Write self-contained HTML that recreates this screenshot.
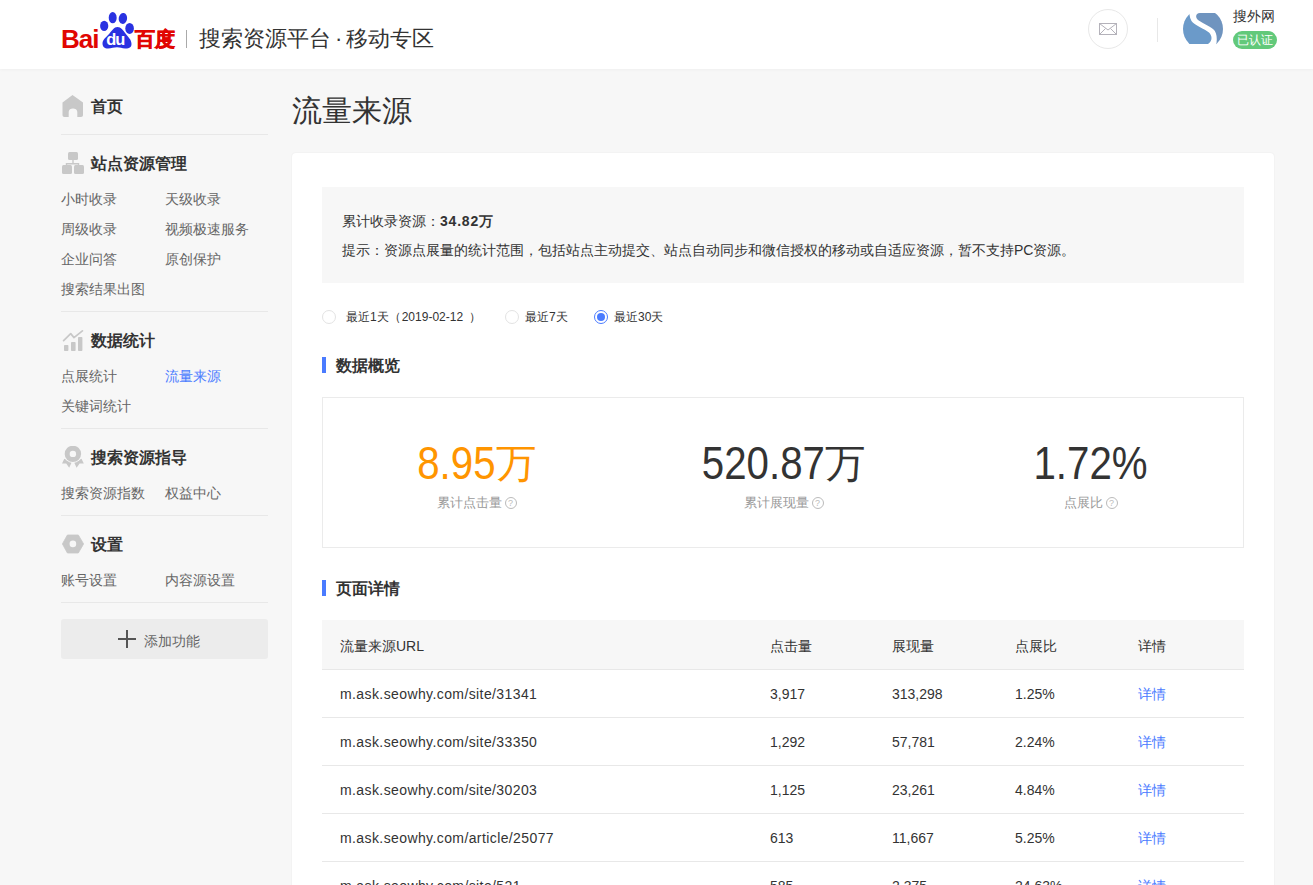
<!DOCTYPE html>
<html><head><meta charset="utf-8">
<style>
*{margin:0;padding:0;box-sizing:border-box}
html,body{width:1313px;height:885px;overflow:hidden;background:#f7f7f7;font-family:"Liberation Sans",sans-serif;color:#333}
.abs{position:absolute;white-space:nowrap}
#hdr{position:absolute;left:0;top:0;width:1313px;height:69px;background:#fff;box-shadow:0 1px 3px rgba(0,0,0,0.035)}
.sb{position:absolute;font-size:14px;color:#666;white-space:nowrap;line-height:16px}
.sbh{position:absolute;font-size:16px;font-weight:bold;color:#333;white-space:nowrap;line-height:18px}
.hr{position:absolute;left:61px;width:207px;height:1px;background:#e8e8e8}
.ico{position:absolute;left:62px}
#card{position:absolute;left:292px;top:153px;width:982px;height:800px;background:#fff;border-radius:4px;box-shadow:0 0 2px rgba(0,0,0,0.07)}
.info{position:absolute;left:322px;top:187px;width:922px;height:96px;background:#f7f7f7}
.t14{position:absolute;white-space:nowrap;font-size:14px;line-height:16px;color:#333}
.radio{position:absolute;top:310px;width:14px;height:14px;border:1px solid #e3e3e3;border-radius:50%;background:#fff}
.rl{position:absolute;top:309px;font-size:12px;line-height:16px;color:#333;white-space:nowrap}
.sec{position:absolute;left:322px;width:4px;height:16px;background:#4a7bff}
.sect{position:absolute;left:336px;font-size:16px;line-height:18px;font-weight:bold;color:#333;white-space:nowrap}
.stats{position:absolute;left:322px;top:397px;width:922px;height:151px;border:1px solid #ebebeb}
.col{position:absolute;top:0;width:307px;text-align:center}
.num{position:absolute;left:0;width:100%;top:40px;font-size:46px;line-height:50px;color:#333;white-space:nowrap;transform:scaleX(0.875)}
.lbl{position:absolute;left:0;width:100%;top:97px;font-size:13px;line-height:16px;color:#999;white-space:nowrap}
.q{display:inline-block;width:12px;height:12px;border:1px solid #bbb;border-radius:50%;font-size:9px;line-height:10px;text-align:center;vertical-align:1px;margin-left:3px;color:#bbb}
.th{position:absolute;left:322px;top:620px;width:922px;height:50px;background:#f7f7f7;border-bottom:1px solid #e8e8e8}
.tr{position:absolute;left:322px;width:922px;height:1px;background:#e8e8e8}
.c{position:absolute;font-size:14px;line-height:16px;color:#333;white-space:nowrap}
.lnk{color:#4a7bff}
.wan{display:inline-block;line-height:50px;transform:scaleY(0.865);transform-origin:50% 56%}
</style></head><body>
<div id="hdr"></div>
<!-- logo -->
<svg class="abs" style="left:60px;top:10px" width="120" height="42" viewBox="0 0 120 42">
  <text x="1" y="38" font-family="Liberation Sans" font-weight="bold" font-size="26" fill="#e10602" letter-spacing="-1">Bai</text>
  <g fill="#2932e1">
    <ellipse cx="44.2" cy="15.9" rx="4.1" ry="5.2"/>
    <ellipse cx="52.7" cy="7.7" rx="4" ry="5.6"/>
    <ellipse cx="62.9" cy="8.4" rx="4.2" ry="5.5" transform="rotate(8 62.9 8.4)"/>
    <ellipse cx="69.6" cy="18.4" rx="4.3" ry="5.5"/>
    <path d="M57.5 17 C61 17 63 20 65.5 23.5 C68 27 71.5 29.5 71.5 34 C71.5 38 68 38.8 65 38.5 C62 38.2 60 37.3 57 37.3 C54 37.3 51.5 38.5 48 38.5 C44.5 38.5 42.5 36.5 42.5 33.5 C42.5 29.5 46.5 27 49.5 23.5 C52 20.5 54 17 57.5 17 Z"/>
  </g>
  <text x="46.3" y="35.3" font-family="Liberation Sans" font-weight="bold" font-size="16.5" letter-spacing="-1.2" fill="#fff">du</text>
  <text x="75" y="36" font-family="Liberation Sans" font-weight="bold" font-size="20" fill="#e10602" stroke="#e10602" stroke-width="0.7">百度</text>
</svg>
<div class="abs" style="left:186px;top:30px;width:1px;height:18px;background:#aaa"></div>
<div class="abs" style="left:199px;top:26px;font-size:22px;line-height:26px;color:#333">搜索资源平台<span style="padding:0 4px">·</span>移动专区</div>

<!-- right header -->
<div class="abs" style="left:1088px;top:9px;width:40px;height:40px;border:1px solid #e8e8e8;border-radius:50%"></div>
<svg class="abs" style="left:1098px;top:22px" width="20" height="14" viewBox="0 0 20 14">
  <rect x="1.5" y="1.5" width="17" height="11" fill="none" stroke="#b4b2ba" stroke-width="1"/>
  <path d="M1.5 1.5 L10 8 L18.5 1.5 M1.5 12.5 L7.5 6.5 M18.5 12.5 L12.5 6.5" fill="none" stroke="#b4b2ba" stroke-width="1"/>
</svg>
<div class="abs" style="left:1157px;top:18px;width:1px;height:24px;background:#e8e8e8"></div>
<svg class="abs" style="left:1183px;top:9px" width="40" height="40" viewBox="0 0 40 40">
  <defs><clipPath id="cc"><circle cx="20" cy="20" r="20"/></clipPath></defs>
  <g clip-path="url(#cc)">
  <path d="M-1 -1 L6 -1 C6.5 3 6 8 8.5 12 C11 16 22 20 26 23.5 C29.5 27 29.5 32 25 35 L-1 35 Z" fill="#6b9ac9"/>
  <path d="M41 4 L17 4 C13 4 12 8 14.5 10.5 C17 13 26 17 30 20 C34 23 34.5 30 33 37 L41 41 Z" fill="#6f94bf"/>
  </g>
</svg>
<div class="abs" style="left:1233px;top:8px;font-size:14px;line-height:16px;color:#333">搜外网</div>
<div class="abs" style="left:1233px;top:31px;width:44px;height:18px;border-radius:9px;background:#62c97a;color:#fff;font-size:12px;line-height:19px;text-align:center">已认证</div>

<!-- sidebar -->
<svg class="ico" style="top:95px" width="22" height="22" viewBox="0 0 22 22"><path d="M10.5 0 L21 7.5 V20 C21 21 20.3 22 19 22 H15.3 V17 C15.3 14.5 13.3 13.5 11 13.5 C8.7 13.5 6.7 14.5 6.7 17 V22 H2.5 C1.2 22 0.5 21 0.5 20 V7.5 Z" fill="#c8c8c8"/></svg>
<div class="sbh" style="left:91px;top:98px">首页</div>
<div class="hr" style="top:134px"></div>

<svg class="ico" style="top:152px" width="22" height="22" viewBox="0 0 22 22"><g fill="#c8c8c8"><rect x="6" y="0" width="10" height="8" rx="1.5"/><rect x="0" y="13" width="10" height="9" rx="1.5"/><rect x="12" y="13" width="10" height="9" rx="1.5"/><path d="M10.3 8 h1.4 v3 h5.5 v2 h-1.4 v-0.6 h-10.6 v0.6 h-1.4 v-2 h6.5 Z"/></g></svg>
<div class="sbh" style="left:91px;top:155px">站点资源管理</div>
<div class="sb" style="left:61px;top:191px">小时收录</div>
<div class="sb" style="left:165px;top:191px">天级收录</div>
<div class="sb" style="left:61px;top:221px">周级收录</div>
<div class="sb" style="left:165px;top:221px">视频极速服务</div>
<div class="sb" style="left:61px;top:251px">企业问答</div>
<div class="sb" style="left:165px;top:251px">原创保护</div>
<div class="sb" style="left:61px;top:281px">搜索结果出图</div>
<div class="hr" style="top:311px"></div>

<svg class="ico" style="top:330px" width="22" height="22" viewBox="0 0 22 22"><g fill="#c8c8c8"><rect x="2" y="15" width="4.4" height="6" rx="0.8"/><rect x="9" y="11.9" width="4.6" height="9.1" rx="0.8"/><rect x="16" y="7" width="4.4" height="14" rx="0.8"/></g><path d="M1.6 10.6 L8.7 3.6 L12 7.6 L20.4 0.9" fill="none" stroke="#c8c8c8" stroke-width="1.7" stroke-linecap="round" stroke-linejoin="round"/></svg>
<div class="sbh" style="left:91px;top:332px">数据统计</div>
<div class="sb" style="left:61px;top:368px">点展统计</div>
<div class="sb lnk" style="left:165px;top:368px">流量来源</div>
<div class="sb" style="left:61px;top:398px">关键词统计</div>
<div class="hr" style="top:428px"></div>

<svg class="ico" style="top:446px" width="22" height="22" viewBox="0 0 22 22"><g fill="#c8c8c8"><path d="M2.3 12.8 L0 17.4 L4.2 17.4 L7.2 21.8 L9.6 16.5 Z M19.5 12.8 L21.8 17.4 L17.6 17.4 L14.6 21.8 L12.2 16.5 Z"/></g><circle cx="10.9" cy="7.9" r="9.1" fill="#f7f7f7"/><circle cx="10.9" cy="7.9" r="8.2" fill="#c8c8c8"/><circle cx="10.9" cy="7.9" r="3.2" fill="#f7f7f7"/></svg>
<div class="sbh" style="left:91px;top:449px">搜索资源指导</div>
<div class="sb" style="left:61px;top:485px">搜索资源指数</div>
<div class="sb" style="left:165px;top:485px">权益中心</div>
<div class="hr" style="top:515px"></div>

<svg class="ico" style="top:534px" width="22" height="22" viewBox="0 0 22 22"><path d="M5.4 1 H16.3 L21.6 9.9 L16.3 19 H5.4 L0.4 9.9 Z" fill="#c8c8c8" stroke="#c8c8c8" stroke-width="0.8" stroke-linejoin="round"/><circle cx="10.9" cy="9.9" r="3.3" fill="#f7f7f7"/></svg>
<div class="sbh" style="left:91px;top:536px">设置</div>
<div class="sb" style="left:61px;top:572px">账号设置</div>
<div class="sb" style="left:165px;top:572px">内容源设置</div>
<div class="hr" style="top:602px"></div>

<div class="abs" style="left:61px;top:619px;width:207px;height:40px;background:#ececec;border-radius:3px"></div>
<svg class="abs" style="left:118px;top:630px" width="18" height="18" viewBox="0 0 18 18"><path d="M8 0 h2 v8 h8 v2 h-8 v8 h-2 v-8 h-8 v-2 h8 Z" fill="#555"/></svg>
<div class="sb" style="left:144px;top:633px">添加功能</div>

<!-- main -->
<div class="abs" style="left:292px;top:94px;font-size:30px;line-height:34px;color:#333">流量来源</div>
<div id="card"></div>
<div class="info"></div>
<div class="t14" style="left:342px;top:213px">累计收录资源：<b style="letter-spacing:0.8px">34.82万</b></div>
<div class="t14" style="left:342px;top:242px">提示：资源点展量的统计范围，包括站点主动提交、站点自动同步和微信授权的移动或自适应资源，暂不支持PC资源。</div>

<div class="radio" style="left:322px"></div>
<div class="rl" style="left:346px">最近1天（<span style="margin-left:1px">2019-02-12</span><span style="margin-left:6px">）</span></div>
<div class="radio" style="left:505px"></div>
<div class="rl" style="left:525px">最近7天</div>
<div class="radio" style="left:594px;border-color:#4a7bff"><div style="position:absolute;left:2px;top:2px;width:8px;height:8px;border-radius:50%;background:#4a7bff"></div></div>
<div class="rl" style="left:614px">最近30天</div>

<div class="sec" style="top:357px"></div>
<div class="sect" style="top:357px">数据概览</div>
<div class="stats">
  <div class="col" style="left:0"><div class="num" style="color:#ff9500">8.95<span class="wan">万</span></div><div class="lbl">累计点击量<span class="q">?</span></div></div>
  <div class="col" style="left:307px"><div class="num">520.87<span class="wan">万</span></div><div class="lbl">累计展现量<span class="q">?</span></div></div>
  <div class="col" style="left:614px"><div class="num">1.72%</div><div class="lbl">点展比<span class="q">?</span></div></div>
</div>

<div class="sec" style="top:580px"></div>
<div class="sect" style="top:580px">页面详情</div>
<div class="th"></div>
<div class="c" style="left:340px;top:638px">流量来源URL</div>
<div class="c" style="left:770px;top:638px">点击量</div>
<div class="c" style="left:892px;top:638px">展现量</div>
<div class="c" style="left:1015px;top:638px">点展比</div>
<div class="c" style="left:1138px;top:638px">详情</div>

<div class="c" style="left:340px;top:686px;letter-spacing:0.4px">m.ask.seowhy.com/site/31341</div>
<div class="c" style="left:770px;top:686px">3,917</div>
<div class="c" style="left:892px;top:686px">313,298</div>
<div class="c" style="left:1015px;top:686px">1.25%</div>
<div class="c lnk" style="left:1138px;top:686px">详情</div>
<div class="tr" style="top:717px"></div>

<div class="c" style="left:340px;top:734px;letter-spacing:0.4px">m.ask.seowhy.com/site/33350</div>
<div class="c" style="left:770px;top:734px">1,292</div>
<div class="c" style="left:892px;top:734px">57,781</div>
<div class="c" style="left:1015px;top:734px">2.24%</div>
<div class="c lnk" style="left:1138px;top:734px">详情</div>
<div class="tr" style="top:765px"></div>

<div class="c" style="left:340px;top:782px;letter-spacing:0.4px">m.ask.seowhy.com/site/30203</div>
<div class="c" style="left:770px;top:782px">1,125</div>
<div class="c" style="left:892px;top:782px">23,261</div>
<div class="c" style="left:1015px;top:782px">4.84%</div>
<div class="c lnk" style="left:1138px;top:782px">详情</div>
<div class="tr" style="top:813px"></div>

<div class="c" style="left:340px;top:830px;letter-spacing:0.4px">m.ask.seowhy.com/article/25077</div>
<div class="c" style="left:770px;top:830px">613</div>
<div class="c" style="left:892px;top:830px">11,667</div>
<div class="c" style="left:1015px;top:830px">5.25%</div>
<div class="c lnk" style="left:1138px;top:830px">详情</div>
<div class="tr" style="top:861px"></div>

<div class="c" style="left:340px;top:878px;letter-spacing:0.4px">m.ask.seowhy.com/site/521</div>
<div class="c" style="left:770px;top:878px">585</div>
<div class="c" style="left:892px;top:878px">2,375</div>
<div class="c" style="left:1015px;top:878px">24.63%</div>
<div class="c lnk" style="left:1138px;top:878px">详情</div>
</body></html>
